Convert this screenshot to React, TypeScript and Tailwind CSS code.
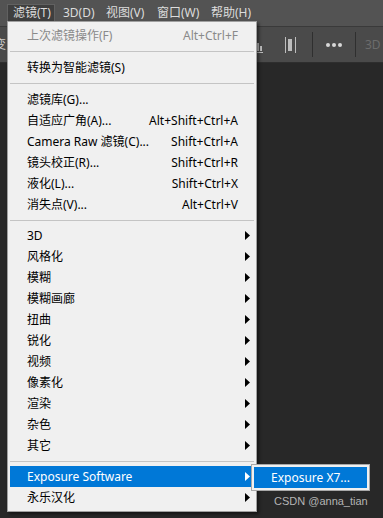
import React from "react";

const FONT = { fontFamily: "'Noto Sans', 'Noto Sans CJK SC', sans-serif" };

type Item =
  | { type: "sep"; h: string; pt: string }
  | { type: "item"; label: string; shortcut?: string; arrow?: boolean; disabled?: boolean; active?: boolean };

const items: Item[] = [
  { type: "item", label: "上次滤镜操作(F)", shortcut: "Alt+Ctrl+F", disabled: true },
  { type: "sep", h: "h-[11px]", pt: "pt-[5px]" },
  { type: "item", label: "转换为智能滤镜(S)" },
  { type: "sep", h: "h-[11px]", pt: "pt-[5px]" },
  { type: "item", label: "滤镜库(G)..." },
  { type: "item", label: "自适应广角(A)...", shortcut: "Alt+Shift+Ctrl+A" },
  { type: "item", label: "Camera Raw 滤镜(C)...", shortcut: "Shift+Ctrl+A" },
  { type: "item", label: "镜头校正(R)...", shortcut: "Shift+Ctrl+R" },
  { type: "item", label: "液化(L)...", shortcut: "Shift+Ctrl+X" },
  { type: "item", label: "消失点(V)...", shortcut: "Alt+Ctrl+V" },
  { type: "sep", h: "h-[10px]", pt: "pt-[5px]" },
  { type: "item", label: "3D", arrow: true },
  { type: "item", label: "风格化", arrow: true },
  { type: "item", label: "模糊", arrow: true },
  { type: "item", label: "模糊画廊", arrow: true },
  { type: "item", label: "扭曲", arrow: true },
  { type: "item", label: "锐化", arrow: true },
  { type: "item", label: "视频", arrow: true },
  { type: "item", label: "像素化", arrow: true },
  { type: "item", label: "渲染", arrow: true },
  { type: "item", label: "杂色", arrow: true },
  { type: "item", label: "其它", arrow: true },
  { type: "sep", h: "h-[10px]", pt: "pt-[5px]" },
  { type: "item", label: "Exposure Software", arrow: true, active: true },
  { type: "item", label: "永乐汉化", arrow: true },
];

function Arrow({ color }: { color: string }) {
  return (
    <svg width="5" height="9" viewBox="0 0 5 9" className="block">
      <polygon points="0,0 5,4.5 0,9" fill={color} />
    </svg>
  );
}

function MenuRow({ it }: { it: Extract<Item, { type: "item" }> }) {
  const textColor = it.active ? "text-white" : it.disabled ? "text-[#8a8a8a]" : "text-black";
  return (
    <div className={`flex h-[21px] items-center ${it.active ? "bg-[#0078d7]" : ""} ${textColor}`}>
      <div className="flex-1 whitespace-nowrap pl-[17px] text-[12px] leading-none">{it.label}</div>
      {it.shortcut && <div className="whitespace-nowrap text-[12px] leading-none">{it.shortcut}</div>}
      <div className="flex w-[16px] items-center pl-[7px]">
        {it.arrow && <Arrow color={it.active ? "#ffffff" : "#000000"} />}
      </div>
    </div>
  );
}

export default function App() {
  return (
    <div className="relative h-[518px] w-[383px] overflow-hidden bg-[#282828]" style={FONT}>
      {/* menu bar */}
      <div className="flex h-[26px] items-start bg-[#535353] pl-[7px] pt-[4px] text-[12px] text-[#dcdcdc]">
        <div className="flex h-[18px] w-[48px] items-center border border-[#616161] bg-[#3f3f3f] pl-[5px] leading-none">
          滤镜(T)
        </div>
        <div className="flex h-[18px] w-[45px] items-center pl-[8px] leading-none">3D(D)</div>
        <div className="flex h-[18px] w-[51px] items-center pl-[6px] leading-none">视图(V)</div>
        <div className="flex h-[18px] w-[54px] items-center pl-[6px] leading-none">窗口(W)</div>
        <div className="flex h-[18px] items-center pl-[6px] leading-none">帮助(H)</div>
      </div>
      <div className="h-[1px] bg-[#3a3a3a]" />
      {/* toolbar */}
      <div className="flex h-[35px] items-center bg-[#4a4a4a] text-[12px] text-[#cfcfcf]">
        <div className="ml-[-6px] w-[250px] leading-none">变</div>
        <div className="ml-[6px] flex h-[16px] w-[13px] flex-col justify-end">
          <div className="flex items-end gap-[1px] pl-[3px]">
            <div className="h-[10px] w-[2px] bg-[#bdbdbd]" />
            <div className="h-[8px] w-[3px] bg-[#bdbdbd]" />
            <div className="h-[5px] w-[2px] bg-[#bdbdbd]" />
          </div>
          <div className="mt-[1px] h-[1px] w-[13px] bg-[#bdbdbd]" />
        </div>
        <div className="ml-[22px] flex h-[16px] items-stretch gap-[2px]">
          <div className="w-[1px] bg-[#bdbdbd]" />
          <div className="my-[2px] w-[4px] bg-[#bdbdbd]" />
          <div className="ml-[1px] w-[1px] bg-[#bdbdbd]" />
        </div>
        <div className="ml-[16px] h-[25px] w-[1px] bg-[#2f2f2f]" />
        <div className="ml-[13px] flex gap-[2px]">
          <div className="h-[4px] w-[4px] rounded-full bg-[#d8d8d8]" />
          <div className="h-[4px] w-[4px] rounded-full bg-[#d8d8d8]" />
          <div className="h-[4px] w-[4px] rounded-full bg-[#d8d8d8]" />
        </div>
        <div className="ml-[13px] h-[25px] w-[1px] bg-[#2f2f2f]" />
        <div className="ml-[9px] whitespace-nowrap leading-none text-[#6c6c6c]">3D</div>
      </div>
      <div className="h-[1px] bg-[#2e2e2e]" />

      {/* dropdown menu */}
      <div className="absolute left-[7px] top-[21px] w-[250px] border border-[#a0a0a0] bg-[#f0f0f0] px-[2px] pb-[3px] pt-[3px] shadow-[2px_2px_3px_rgba(0,0,0,0.5)]">
        {items.map((it, i) =>
          it.type === "sep" ? (
            <div key={i} className={`${it.h} ${it.pt}`}>
              <div className="h-[1px] bg-[#c4c4c4]" />
            </div>
          ) : (
            <MenuRow key={i} it={it} />
          )
        )}
      </div>

      {/* submenu */}
      <div className="absolute left-[251px] top-[464px] w-[119px] border border-[#a8a8a8] bg-[#f0f0f0] p-[2px]">
        <div className="flex h-[21px] items-center whitespace-nowrap bg-[#0078d7] pl-[17px] text-[12px] leading-none text-white">
          Exposure X7...
        </div>
      </div>

      {/* watermark */}
      <div
        className="absolute left-[274px] top-[496px] whitespace-nowrap text-[11px] leading-none text-[#b4b4b4]"
        style={{ fontFamily: "'Liberation Sans', Arial, sans-serif" }}
      >
        CSDN @anna_tian
      </div>
    </div>
  );
}
